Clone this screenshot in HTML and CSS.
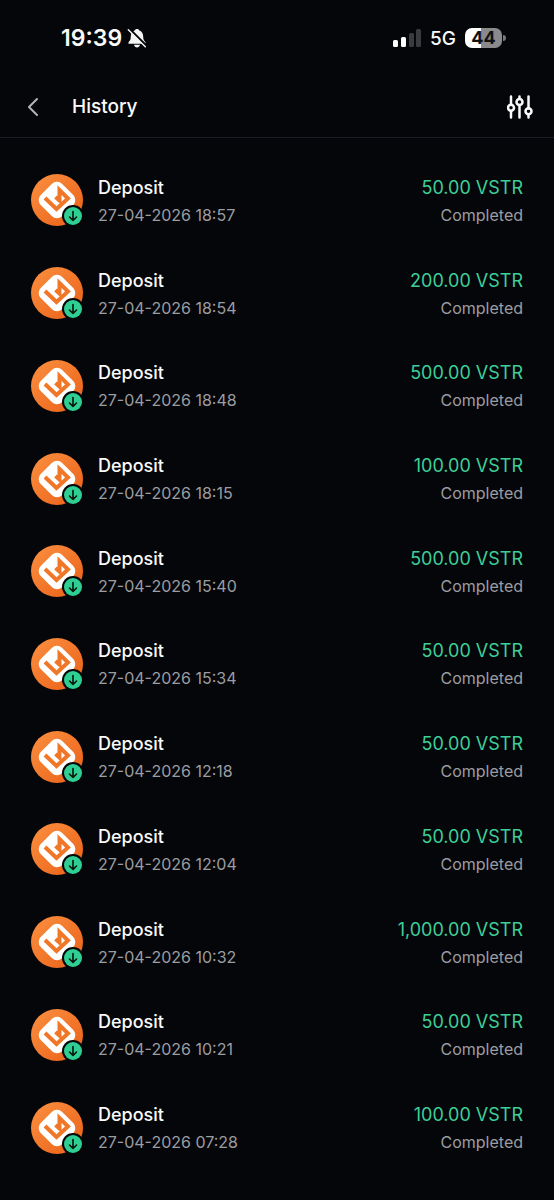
FILE: index.html
```
<!DOCTYPE html>
<html lang="en">
<head>
<meta charset="utf-8">
<meta name="viewport" content="width=device-width, initial-scale=1">
<title>History</title>
<link rel="stylesheet" href="styles.css">
</head>
<body>
<svg width="0" height="0" class="defs" aria-hidden="true">
  <defs>
    <linearGradient id="orange" x1="0" y1="0" x2="1" y2="1">
      <stop offset="0" stop-color="#fb9040"/>
      <stop offset="1" stop-color="#ea6018"/>
    </linearGradient>
    <symbol id="coin" viewBox="0 0 52 52">
      <circle cx="26" cy="26" r="26" fill="url(#orange)"/>
      <rect x="11" y="11" width="30" height="30" rx="7" fill="#fff" transform="rotate(45 26 26)"/>
      <path d="M14 24L25.500 35L37 24.500L28.500 16V26.500L24.500 23" fill="none" stroke="#f07628" stroke-width="4" stroke-linejoin="miter"/>
    </symbol>
    <symbol id="down" viewBox="0 0 22 22">
      <circle cx="11" cy="11" r="11" fill="#050609"/>
      <circle cx="11" cy="11" r="9" fill="#2fce92"/>
      <path d="M11 6.500V15.500M7.500 12L11 15.500L14.500 12" fill="none" stroke="#07150f" stroke-width="1.600" stroke-linecap="round" stroke-linejoin="round"/>
    </symbol>
  </defs>
</svg>
<div class="app">
  <div class="status">
    <div class="status-group clock">
      <span>19:39</span>
      <svg width="20" height="20" viewBox="0 0 20 20" aria-hidden="true">
        <path d="M10 1C8.800 1 8.200 1.500 8 2.300C5 3.200 3.800 5.800 3.800 8.500C3.800 11.500 3 12.700 1.500 14.200V15.800H18.500V14.200C17 12.700 16.200 11.500 16.200 8.500C16.200 5.800 15 3.200 12 2.300C11.800 1.500 11.200 1 10 1ZM7 16.800C7.500 18.500 8.500 19.500 10 19.500S12.500 18.500 13 16.800Z" fill="#f4f4f5"/>
        <path d="M2.300 0.700L19.500 17.900" stroke="#050609" stroke-width="2.200"/>
        <path d="M1.300 1.700L18.300 18.700" stroke="#f4f4f5" stroke-width="1.500" stroke-linecap="round"/>
      </svg>
    </div>
    <div class="status-group">
      <svg width="29" height="19" viewBox="0 0 29 19" aria-hidden="true">
        <rect x="1" y="11" width="5" height="7" rx="1.500" fill="#fff"/>
        <rect x="9" y="8" width="5" height="10" rx="1.500" fill="#fff"/>
        <rect x="17" y="4" width="5" height="14" rx="1.500" fill="#3a3b3e"/>
        <rect x="24" y="0" width="5" height="18" rx="1.500" fill="#3a3b3e"/>
      </svg>
      <span class="network">5G</span>
      <div class="battery"><span class="level">44</span></div>
    </div>
  </div>
  <header class="header">
    <button class="icon-button" aria-label="Back">
      <svg width="12" height="20" viewBox="0 0 12 20" aria-hidden="true"><path d="M10 2L2 10L10 18" fill="none" stroke="#b4b5b9" stroke-width="2" stroke-linecap="round" stroke-linejoin="round"/></svg>
    </button>
    <h1>History</h1>
    <button class="icon-button" aria-label="Filter">
      <svg width="26" height="26" viewBox="0 0 26 26" fill="none" stroke="#fafafa" stroke-width="2.500" stroke-linecap="round" aria-hidden="true">
        <path d="M4 2.500V10.500M4 17V23.500M12.500 2.500V4.500M12.500 11V23.500M21.500 2.500V14.500M21.500 21V23.500"/>
        <circle cx="4" cy="13.700" r="3"/><circle cx="12.500" cy="8" r="3"/><circle cx="21.500" cy="17.300" r="3"/>
      </svg>
    </button>
  </header>
  <ul class="list" id="list"></ul>
</div>
<script src="app.js"></script>
</body>
</html>
```
FILE: styles.css
```
* { box-sizing: border-box; }

body {
  margin: 0;
  background: #050609;
  color: #fafafa;
  font-family: Inter, "Noto Sans", sans-serif;
}

.defs { position: absolute; }

.app {
  display: flex;
  flex-direction: column;
  min-height: 100vh;
}

.status {
  display: flex;
  justify-content: space-between;
  align-items: center;
  height: 76px;
  padding: 0 48px 0 61px;
}

.status-group {
  display: flex;
  align-items: center;
  gap: 9px;
}

.clock {
  gap: 5px;
  font-size: 23px;
  font-weight: 600;
}

.network {
  font-size: 19px;
  font-weight: 500;
}

.battery {
  position: relative;
  width: 37px;
  height: 20px;
  margin-right: 4px;
  border-radius: 7px;
  background: linear-gradient(90deg, #fff 44%, #8a8a8c 44%);
  color: #101113;
  font-size: 18px;
  font-weight: 700;
  line-height: 20px;
  text-align: center;
}

.battery::after {
  content: "";
  position: absolute;
  top: 7px;
  right: -4px;
  width: 3px;
  height: 6px;
  border-radius: 0 3px 3px 0;
  background: #77787b;
}

.header {
  display: flex;
  align-items: center;
  height: 62px;
  padding: 0 21px 0 27px;
  border-bottom: 1px solid #1c1d24;
}

h1 {
  flex: 1;
  margin: 0;
  padding-left: 33px;
  font-size: 19px;
  font-weight: 500;
}

.icon-button {
  display: flex;
  padding: 0;
  border: 0;
  background: none;
}

.list {
  display: grid;
  flex: 1;
  grid-auto-rows: 1fr;
  margin: 0;
  padding: 16px 31px 26px;
  list-style: none;
}

.row {
  display: flex;
  align-items: center;
  gap: 15px;
}

.avatar {
  position: relative;
  width: 52px;
  height: 52px;
}

.coin {
  display: block;
  width: 52px;
  height: 52px;
}

.badge {
  position: absolute;
  right: -1px;
  bottom: -1px;
  width: 22px;
  height: 22px;
}

.details,
.amounts {
  padding-top: 1px;
}

.details { flex: 1; }

.amounts { text-align: right; }

.primary {
  font-size: 18px;
  font-weight: 500;
  line-height: 28px;
}

.secondary {
  color: #9c9da1;
  font-size: 16px;
  line-height: 26px;
}

.amount {
  color: #3ecf98;
  font-weight: 400;
}
```
FILE: app.js
```
const deposits = [
  ["27-04-2026 18:57", "50.00"],
  ["27-04-2026 18:54", "200.00"],
  ["27-04-2026 18:48", "500.00"],
  ["27-04-2026 18:15", "100.00"],
  ["27-04-2026 15:40", "500.00"],
  ["27-04-2026 15:34", "50.00"],
  ["27-04-2026 12:18", "50.00"],
  ["27-04-2026 12:04", "50.00"],
  ["27-04-2026 10:32", "1,000.00"],
  ["27-04-2026 10:21", "50.00"],
  ["27-04-2026 07:28", "100.00"]
];

document.getElementById("list").innerHTML = deposits.map(([date, amount]) => `
  <li class="row">
    <div class="avatar">
      <svg class="coin" aria-hidden="true"><use href="#coin"/></svg>
      <svg class="badge" aria-hidden="true"><use href="#down"/></svg>
    </div>
    <div class="details">
      <div class="primary">Deposit</div>
      <div class="secondary">${date}</div>
    </div>
    <div class="amounts">
      <div class="primary amount">${amount} VSTR</div>
      <div class="secondary">Completed</div>
    </div>
  </li>`).join("");
```
